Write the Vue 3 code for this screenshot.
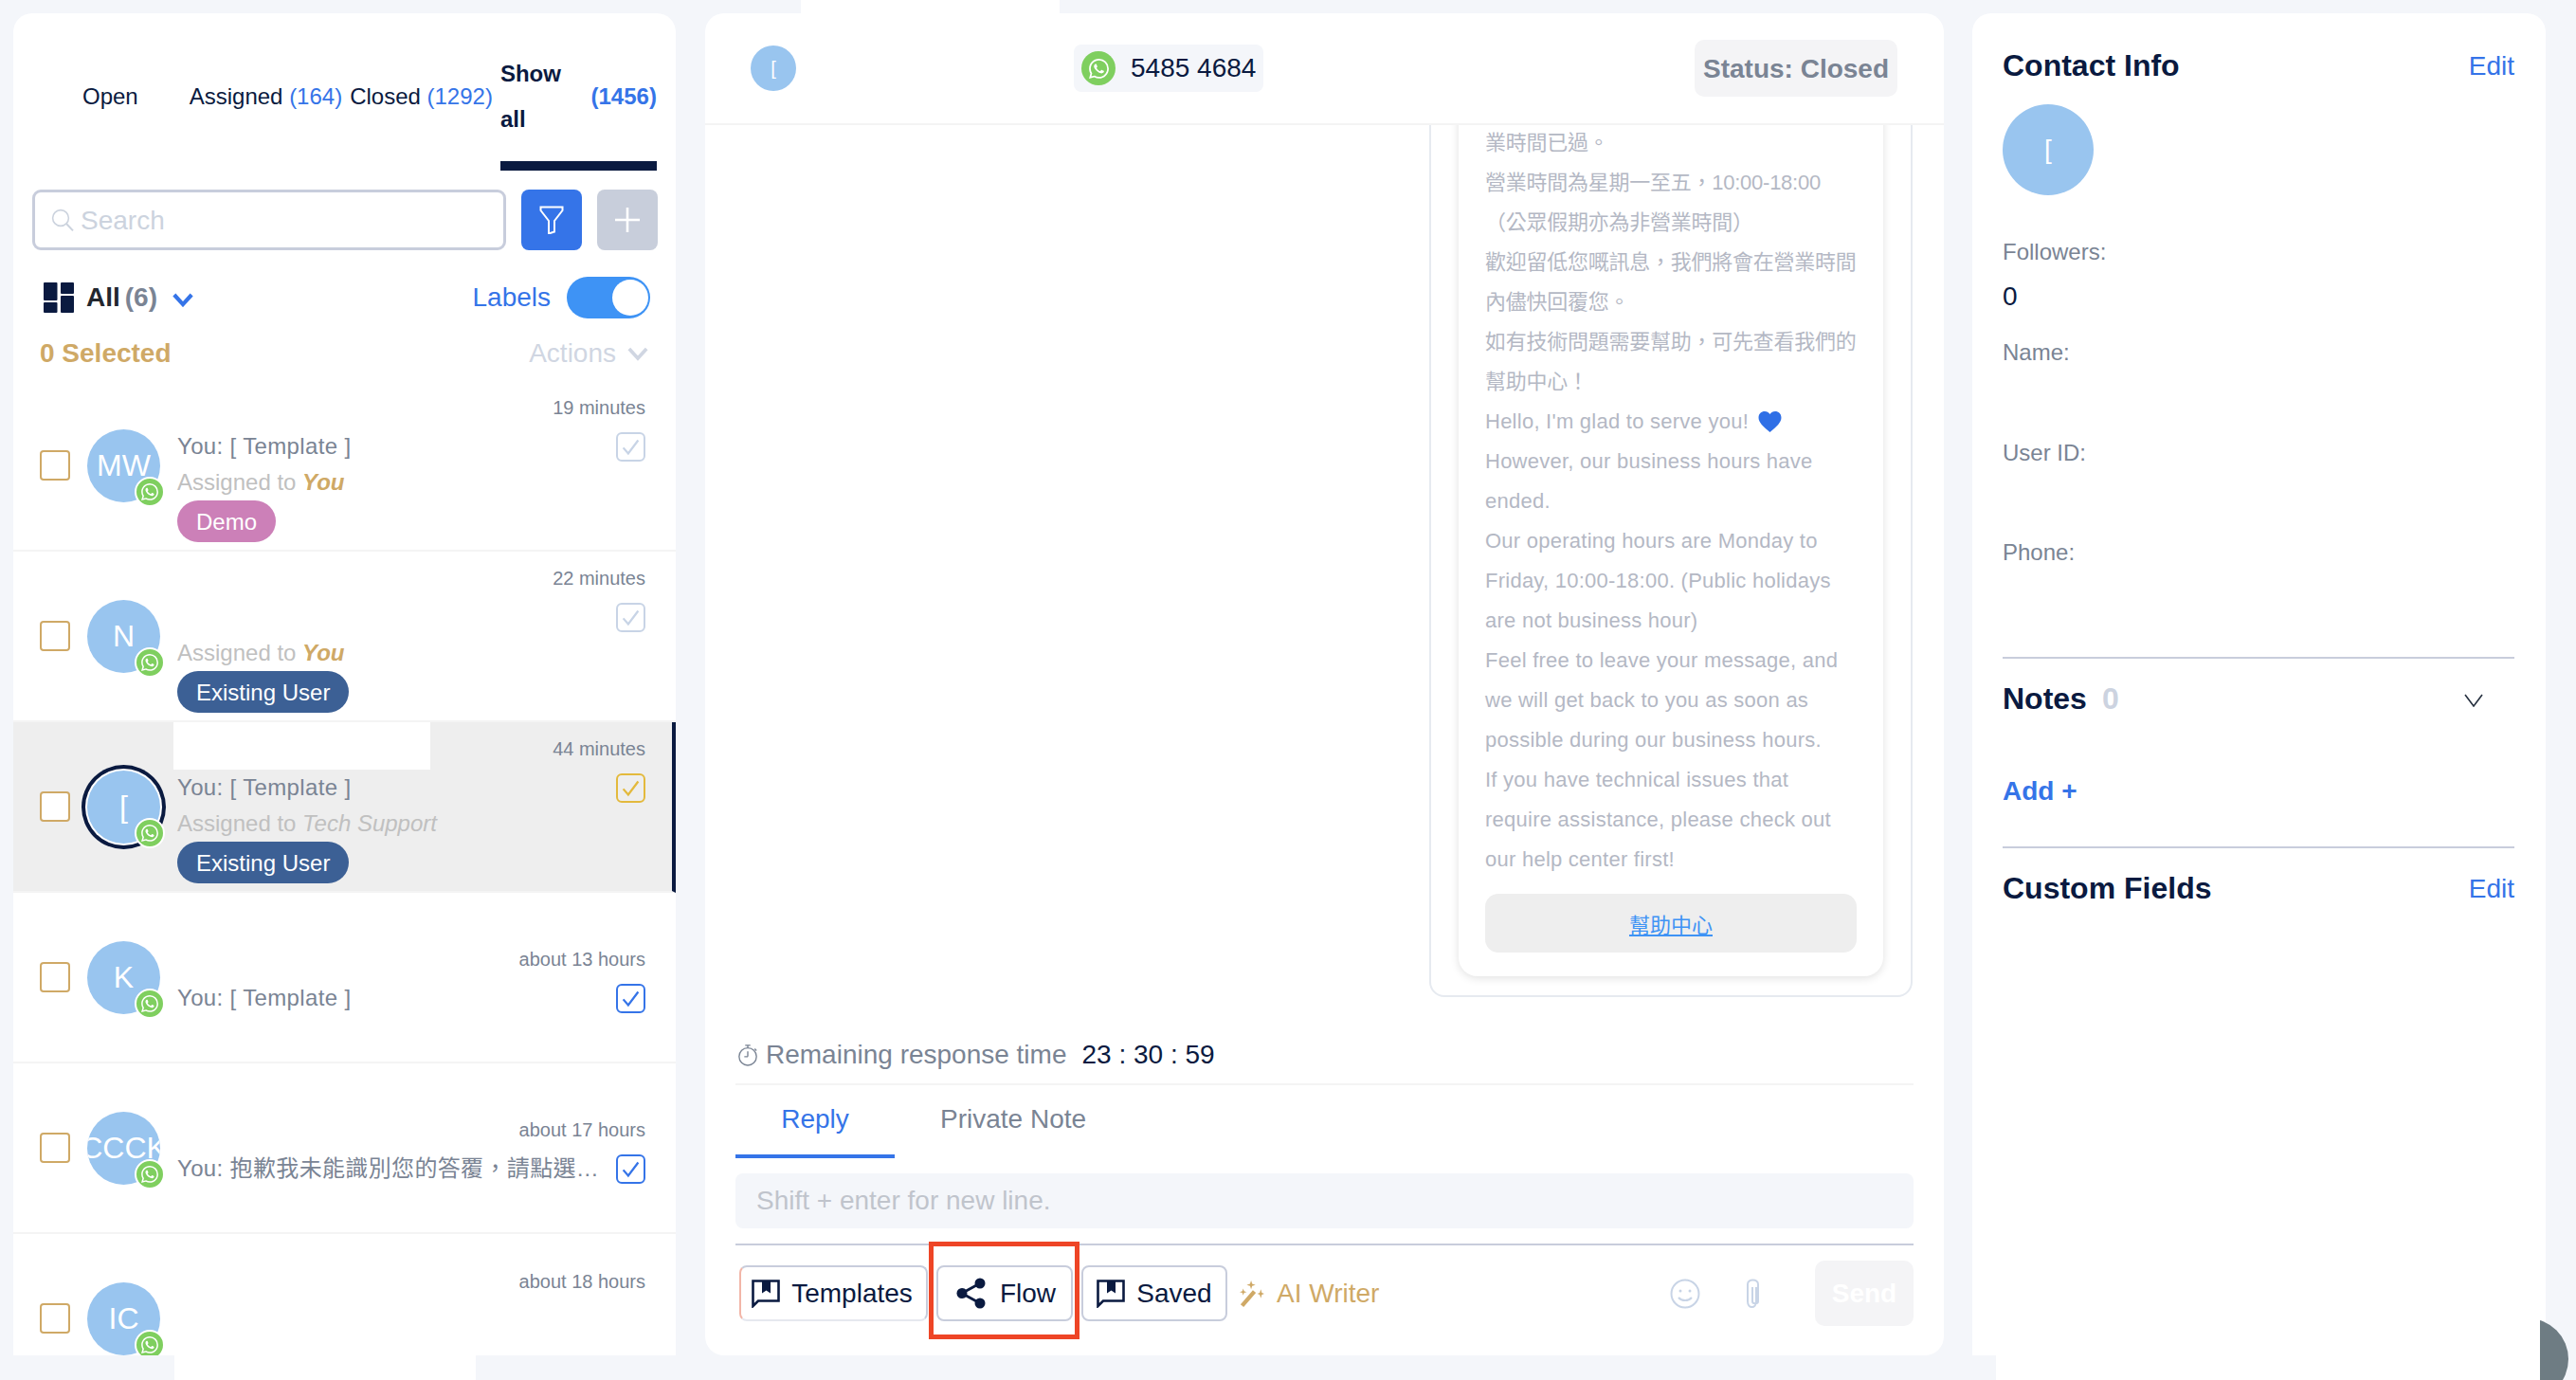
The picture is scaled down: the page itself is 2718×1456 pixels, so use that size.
<template>
  <div class="page">
    <!-- conversation list -->
    <section class="panel list-panel">
      <div class="tabs">
        <div class="tab tab-open">Open</div>
        <div class="tab tab-assigned">Assigned&nbsp;<span class="count">(164)</span></div>
        <div class="tab tab-closed">Closed&nbsp;<span class="count">(1292)</span></div>
        <div class="tab tab-all">
          <span class="all-label">Show all</span>
          <span class="count">(1456)</span>
        </div>
      </div>

      <div class="search-row">
        <div class="search-box">
          <svg class="search-icon" viewBox="0 0 24 24" fill="none" stroke="#ccd3de" stroke-width="1.6">
            <circle cx="10" cy="10" r="8.4" />
            <path d="M16 16l7 7.4" stroke-width="2" />
          </svg>
          <span>Search</span>
        </div>
        <div class="square-btn filter-btn">
          <svg viewBox="0 0 26 30" width="26" height="30" fill="none" stroke="#fff" stroke-width="2">
            <path d="M1.5 1.5h23v3.5L16 16v11.5l-6 2V16L1.500 5z" />
          </svg>
        </div>
        <div class="square-btn add-btn">
          <svg viewBox="0 0 24 24" width="26" height="26" stroke="#fff" stroke-width="2.4">
            <path d="M12 0v24M0 12h24" />
          </svg>
        </div>
      </div>

      <div class="filter-row">
        <svg class="grid-icon" viewBox="0 0 32 32" fill="#0a1a40">
          <rect x="0" y="0" width="14.500" height="19" rx="1" />
          <rect x="18" y="0" width="14" height="12" rx="1" />
          <rect x="0" y="21" width="14.500" height="11" rx="1" />
          <rect x="18" y="14" width="14" height="18" rx="1" />
        </svg>
        <span class="all-text">All</span>
        <span class="all-count">(6)</span>
        <svg class="all-chevron" viewBox="0 0 24 16" fill="none" stroke="#3574e8" stroke-width="4.500">
          <path d="M2 2l10 11L22 2" />
        </svg>
        <span class="labels-text">Labels</span>
        <div class="toggle"><div class="knob"></div></div>
      </div>

      <div class="selected-row">
        <span class="selected-text">0 Selected</span>
        <span class="actions-text">Actions</span>
        <svg class="actions-chevron" viewBox="0 0 24 16" fill="none" stroke="#d0d6e2" stroke-width="4">
          <path d="M2 2l10 11L22 2" />
        </svg>
      </div>

      <div class="items">
        <div
          v-for="item in items"
          :key="item.id"
          :class="['item', { active: item.active }]"
        >
          <div class="pick"></div>
          <div class="avatar-wrap">
            <div class="avatar"><span>{{ item.initials }}</span></div>
            <div class="badge">
              <svg viewBox="0 0 24 24" width="18" height="18" fill="#fff"><path :d="whatsappPath" /></svg>
            </div>
          </div>
          <div class="item-body">
            <div class="item-time">{{ item.time }}</div>
            <div class="item-msg-row">
              <div class="item-msg">{{ item.msg }}</div>
              <div v-if="item.check" :class="['check', item.check]">
                <svg viewBox="0 0 24 24" width="21" height="21" fill="none" stroke="currentColor" stroke-width="2.600">
                  <path d="M3 13l6 7L21 4" />
                </svg>
              </div>
            </div>
            <div v-if="item.assigned" class="item-assigned">
              Assigned to <em :class="{ you: item.assigned === 'You' }">{{ item.assigned }}</em>
            </div>
            <div v-if="item.spacer" class="item-spacer"></div>
            <div v-if="item.tag" class="tag" :class="item.tagClass">{{ item.tag }}</div>
          </div>
        </div>
      </div>
    </section>

    <!-- chat -->
    <section class="panel chat-panel">
      <header class="chat-head">
        <div class="head-avatar">[</div>
        <div class="phone-pill">
          <div class="phone-icon">
            <svg viewBox="0 0 24 24" width="21" height="21" fill="#fff"><path :d="whatsappPath" /></svg>
          </div>
          <span>5485 4684</span>
        </div>
        <div class="status">Status: Closed</div>
      </header>

      <div class="chat-scroll">
        <div class="bubble">
          <div class="bubble-card">
            <div
              v-for="line in messageLines"
              :key="line"
              :class="['bubble-line', { cjk: /[\u4e00-\u9fff]/.test(line) }]"
            >
              {{ line }}
              <svg v-if="line.startsWith('Hello')" class="heart" viewBox="0 0 24 22">
                <path fill="#2f6fe6" d="M12 21.500C5 15.500.5 11.500.5 6.800.5 3 3.400.5 6.700.5c2.200 0 4.100 1 5.300 2.900C13.200 1.500 15.100.5 17.300.5c3.300 0 6.200 2.500 6.200 6.300 0 4.700-4.500 8.700-11.500 14.700z" />
              </svg>
            </div>
            <div class="help-btn"><a class="help-link">幫助中心</a></div>
          </div>
        </div>
      </div>

      <div class="composer">
        <div class="timer">
          <svg class="timer-icon" viewBox="0 0 24 26" fill="none" stroke="#7a8494" stroke-width="1.500">
            <circle cx="12" cy="15" r="10" />
            <path d="M9 2h6M12 2v3M12 15V9M12 15H8M20 6l2 2" />
          </svg>
          <span class="timer-label">Remaining response time</span>
          <span class="timer-value">23 : 30 : 59</span>
        </div>

        <div class="reply-tabs">
          <div class="reply-tab active">Reply</div>
          <div class="reply-tab">Private Note</div>
        </div>

        <div class="reply-input">Shift + enter for new line.</div>

        <div class="toolbar">
          <div class="tool-btn tool-templates">
            <svg viewBox="0 0 30 30" width="30" height="30"><path fill="none" stroke="#0a1a40" stroke-width="2.600" d="M1.500 1.500h27v21H7L1.500 28z" /><path fill="#0a1a40" d="M11 1.500h9v13l-4.500-3-4.500 3z" /></svg>
            <span>Templates</span>
          </div>
          <div class="tool-btn tool-flow">
            <svg viewBox="0 0 31 33" width="31" height="33"><path fill="none" stroke="#0a1a40" stroke-width="2.800" d="M25 6L6 16.500 25 27" /><circle cx="25" cy="6" r="5.500" fill="#0a1a40" /><circle cx="6" cy="16.500" r="5.500" fill="#0a1a40" /><circle cx="25" cy="27" r="5.500" fill="#0a1a40" /></svg>
            <span>Flow</span>
          </div>
          <div class="tool-btn tool-saved">
            <svg viewBox="0 0 30 30" width="30" height="30"><path fill="none" stroke="#0a1a40" stroke-width="2.600" d="M1.500 1.500h27v21H7L1.500 28z" /><path fill="#0a1a40" d="M11 1.500h9v13l-4.500-3-4.500 3z" /></svg>
            <span>Saved</span>
          </div>
          <div class="ai-writer">
            <svg viewBox="0 0 28 30" width="26" height="28" fill="#cfa966">
              <path d="M1 27L15 11l3.500 3L4.500 30z" />
              <path d="M13 0l1.200 3.800L18 5l-3.800 1.200L13 10l-1.200-3.800L8 5l3.800-1.200zM24 10l1.200 3.800L28 15l-2.800 1.200L24 20l-1.200-3.800L20 15l2.800-1.200zM4 9l1 3 3 1-3 1-1 3-1-3-3-1 3-1z" />
            </svg>
            <span>AI Writer</span>
          </div>
          <svg class="emoji-icon" viewBox="0 0 32 32" fill="none" stroke="#c8d4e6" stroke-width="2">
            <circle cx="16" cy="16" r="14.500" />
            <circle cx="11" cy="13" r="1.500" fill="#c8d4e6" stroke="none" />
            <circle cx="21" cy="13" r="1.500" fill="#c8d4e6" stroke="none" />
            <path d="M9 20c3.500 4 10.500 4 14 0" />
          </svg>
          <svg class="clip-icon" viewBox="0 0 16 32" fill="none" stroke="#c8d4e6" stroke-width="2">
            <path d="M12 9v15c0 8-9 8-9 0V6c0-6 11-6 11 0v18c0 3-6 3-6 0V9" />
          </svg>
          <div class="send-btn">Send</div>
        </div>
      </div>
    </section>

    <!-- contact -->
    <section class="panel info-panel">
      <div class="info-title-row">
        <h2>Contact Info</h2>
        <span class="edit">Edit</span>
      </div>
      <div class="info-avatar">[</div>
      <div class="info-label followers">Followers:</div>
      <div class="info-value">0</div>
      <div class="fields">
        <div v-for="field in fields" :key="field" class="field info-label">{{ field }}</div>
      </div>
      <div class="divider first"></div>
      <div class="info-title-row notes-row">
        <h2>Notes</h2>
        <span class="notes-count">0</span>
        <svg class="notes-chevron" viewBox="0 0 20 14" fill="none" stroke="#26303f" stroke-width="1.600">
          <path d="M1 1l9 12 9-12" />
        </svg>
      </div>
      <div class="add-note">Add +</div>
      <div class="divider second"></div>
      <div class="info-title-row custom-row">
        <h2>Custom Fields</h2>
        <span class="edit">Edit</span>
      </div>
    </section>

    <!-- blanked out areas and overlays of the screenshot -->
    <div class="patch patch-top"></div>
    <div class="patch patch-item"></div>
    <div class="patch patch-list"></div>
    <div class="patch patch-info"></div>
    <div class="chat-bubble-btn"><div class="chat-bubble-circle"></div></div>
    <div class="flow-highlight"></div>
  </div>
</template>

<script setup>
const whatsappPath = 'M17.472 14.382c-.297-.149-1.758-.867-2.03-.967-.273-.099-.471-.148-.67.15-.197.297-.767.966-.94 1.164-.173.199-.347.223-.644.075-.297-.15-1.255-.463-2.39-1.475-.883-.788-1.48-1.761-1.653-2.059-.173-.297-.018-.458.13-.606.134-.133.298-.347.446-.52.149-.174.198-.298.298-.497.099-.198.05-.371-.025-.52-.075-.149-.669-1.612-.916-2.207-.242-.579-.487-.5-.669-.51-.173-.008-.371-.01-.57-.01-.198 0-.52.074-.792.372-.272.297-1.04 1.016-1.04 2.479 0 1.462 1.065 2.875 1.213 3.074.149.198 2.096 3.2 5.077 4.487.709.306 1.262.489 1.694.625.712.227 1.36.195 1.871.118.571-.085 1.758-.719 2.006-1.413.248-.694.248-1.289.173-1.413-.074-.124-.272-.198-.57-.347m-5.421 7.403h-.004a9.87 9.87 0 01-5.031-1.378l-.361-.214-3.741.982.998-3.648-.235-.374a9.86 9.86 0 01-1.51-5.26c.001-5.45 4.436-9.884 9.888-9.884 2.64 0 5.122 1.03 6.988 2.898a9.825 9.825 0 012.893 6.994c-.003 5.45-4.437 9.884-9.885 9.884m8.413-18.297A11.815 11.815 0 0012.05 0C5.495 0 .16 5.335.157 11.892c0 2.096.547 4.142 1.588 5.945L.057 24l6.305-1.654a11.882 11.882 0 005.683 1.448h.005c6.554 0 11.89-5.335 11.893-11.893a11.821 11.821 0 00-3.48-8.413z'

const items = [
  { id: 1, initials: 'MW', time: '19 minutes', msg: 'You: [ Template ]', check: 'muted', assigned: 'You', tag: 'Demo', tagClass: 'tag-demo' },
  { id: 2, initials: 'N', time: '22 minutes', msg: '', check: 'muted', assigned: 'You', tag: 'Existing User', tagClass: 'tag-user' },
  { id: 3, initials: '[', time: '44 minutes', msg: 'You: [ Template ]', check: 'gold', assigned: 'Tech Support', tag: 'Existing User', tagClass: 'tag-user', active: true },
  { id: 4, initials: 'K', time: 'about 13 hours', msg: 'You: [ Template ]', check: 'blue' },
  { id: 5, initials: 'CCCK', time: 'about 17 hours', msg: 'You: 抱歉我未能識別您的答覆，請點選下方的選項繼續查詢', check: 'blue' },
  { id: 6, initials: 'IC', time: 'about 18 hours', msg: '', spacer: true }
]

const messageLines = [
  '業時間已過。',
  '營業時間為星期一至五，10:00-18:00',
  '（公眾假期亦為非營業時間）',
  '歡迎留低您嘅訊息，我們將會在營業時間',
  '內儘快回覆您。',
  '如有技術問題需要幫助，可先查看我們的',
  '幫助中心！',
  "Hello, I'm glad to serve you!",
  'However, our business hours have',
  'ended.',
  'Our operating hours are Monday to',
  'Friday, 10:00-18:00. (Public holidays',
  'are not business hour)',
  'Feel free to leave your message, and',
  'we will get back to you as soon as',
  'possible during our business hours.',
  'If you have technical issues that',
  'require assistance, please check out',
  'our help center first!'
]

const fields = ['Name:', 'User ID:', 'Phone:']
</script>

<style>
html,
body {
  margin: 0;
  background: #f4f6fa;
}
</style>

<style scoped>
.page {
  position: relative;
  width: 2718px;
  height: 1456px;
  box-sizing: border-box;
  padding: 14px 32px 26px 14px;
  display: grid;
  grid-template-columns: 699px 1308px 605px;
  column-gap: 30px;
  background: #f4f6fa;
  overflow: hidden;
  font-family: "Liberation Sans", "Noto Sans CJK TC", sans-serif;
  color: #0a1a40;
}

.panel {
  background: #fff;
  border-radius: 20px 20px 0 0;
  overflow: hidden;
  min-height: 0;
}

/* list panel */
.list-panel {
  display: flex;
  flex-direction: column;
}

.tabs {
  display: flex;
  flex-shrink: 0;
  height: 166px;
  box-sizing: border-box;
  padding: 39px 19px 0 73px;
  font-size: 24px;
}

.tab {
  display: flex;
  align-items: center;
  height: 97px;
  white-space: nowrap;
}

.tab-assigned {
  margin-left: 54px;
}

.tab-closed {
  margin-left: 8px;
}

.tab-all {
  width: 165px;
  margin-left: 8px;
  height: 127px;
  box-sizing: border-box;
  padding-bottom: 20px;
  border-bottom: 10px solid #0a1a40;
  justify-content: space-between;
  font-weight: 700;
}

.all-label {
  width: 60px;
  line-height: 48px;
  white-space: normal;
}

.count {
  color: #3574e8;
}

.search-row {
  display: flex;
  flex-shrink: 0;
  gap: 16px;
  margin: 20px 19px 0 20px;
}

.search-box {
  flex: 1;
  height: 64px;
  box-sizing: border-box;
  border: 3px solid #c8cddc;
  border-radius: 9px;
  display: flex;
  align-items: center;
  padding-left: 17px;
  gap: 7px;
  font-size: 28px;
  color: #ccd3de;
}

.search-box span {
  padding-top: 1px;
}

.search-icon {
  width: 24px;
  height: 26px;
}

.square-btn {
  width: 64px;
  height: 64px;
  border-radius: 8px;
  display: flex;
  align-items: center;
  justify-content: center;
}

.filter-btn {
  background: #3574e8;
}

.add-btn {
  background: #c8cedb;
}

.filter-row {
  display: flex;
  flex-shrink: 0;
  align-items: center;
  height: 44px;
  margin: 28px 27px 0 32px;
  font-size: 28px;
}

.grid-icon {
  width: 32px;
  height: 32px;
  margin-right: 13px;
}

.all-text {
  font-weight: 700;
  color: #23272e;
}

.all-count {
  margin-left: 5px;
  font-weight: 700;
  color: #7a8494;
}

.all-chevron {
  width: 22px;
  height: 15px;
  margin: 4px 0 0 16px;
}

.labels-text {
  margin-left: auto;
  color: #3574e8;
}

.toggle {
  width: 88px;
  height: 44px;
  margin-left: 17px;
  box-sizing: border-box;
  padding: 3px 2px 3px 0;
  border-radius: 22px;
  background: #3e93f5;
  display: flex;
  justify-content: flex-end;
}

.knob {
  width: 38px;
  height: 38px;
  border-radius: 50%;
  background: #fff;
}

.selected-row {
  display: flex;
  flex-shrink: 0;
  align-items: center;
  height: 42px;
  margin: 16px 29px 0 28px;
  font-size: 28px;
}

.selected-text {
  font-weight: 700;
  color: #cfa966;
}

.actions-text {
  margin-left: auto;
  color: #d0d6e2;
}

.actions-chevron {
  width: 22px;
  height: 15px;
  margin-left: 12px;
}

.items {
  flex: 1;
  min-height: 0;
  margin-top: 8px;
  overflow: hidden;
}

.item {
  height: 180px;
  box-sizing: border-box;
  border-bottom: 2px solid #f4f4f4;
  padding: 0 32px 0 28px;
  display: flex;
  align-items: center;
}

.item.active {
  background: #eeeeee;
  border-right: 4px solid #0a1a40;
  padding-right: 28px;
}

.pick {
  width: 32px;
  height: 32px;
  flex-shrink: 0;
  box-sizing: border-box;
  border: 2.500px solid #cfa966;
  border-radius: 4px;
  background: #fff;
  margin-right: 18px;
}

.avatar-wrap {
  position: relative;
  width: 77px;
  height: 77px;
  flex-shrink: 0;
  margin-right: 18px;
}

.avatar {
  width: 77px;
  height: 77px;
  border-radius: 50%;
  background: #99c5ef;
  color: #fff;
  font-size: 32px;
  overflow: hidden;
  display: flex;
  align-items: center;
  justify-content: center;
  white-space: nowrap;
}

.item.active .avatar {
  box-shadow: 0 0 0 2px #fff, 0 0 0 6px #0a1a40;
}

.badge {
  position: absolute;
  left: 50px;
  top: 50px;
  width: 32px;
  height: 32px;
  box-sizing: border-box;
  border: 2px solid #fff;
  border-radius: 50%;
  background: #7fcf5f;
  display: flex;
  align-items: center;
  justify-content: center;
}

.item-body {
  flex: 1;
  min-width: 0;
}

.item-time {
  height: 45px;
  line-height: 40px;
  text-align: right;
  font-size: 20px;
  color: #7a8494;
}

.item-msg-row {
  display: flex;
  justify-content: space-between;
  gap: 13px;
  height: 33px;
  padding-top: 1px;
  box-sizing: border-box;
}

.item-msg {
  flex: 1;
  min-width: 0;
  height: 32px;
  line-height: 30px;
  font-size: 24px;
  letter-spacing: 0.35px;
  color: #7a8494;
  white-space: nowrap;
  overflow: hidden;
  text-overflow: ellipsis;
}

.check {
  width: 31px;
  height: 31px;
  flex-shrink: 0;
  box-sizing: border-box;
  border: 2px solid currentColor;
  border-radius: 6px;
  display: flex;
  align-items: center;
  justify-content: center;
}

.check.muted {
  color: #c8d4e6;
}

.check.gold {
  color: #e3b93c;
}

.check.blue {
  color: #3574e8;
}

.item-assigned {
  height: 40px;
  line-height: 42px;
  font-size: 24px;
  color: #c0c0c0;
}

.item-assigned em.you {
  font-weight: 700;
  color: #cfa966;
}

.item-spacer {
  height: 40px;
}

.tag {
  display: inline-block;
  height: 44px;
  line-height: 45px;
  padding: 0 20px;
  border-radius: 22px;
  font-size: 24px;
  color: #fff;
}

.tag-demo {
  background: #cc80b8;
}

.tag-user {
  background: #3c6095;
}

/* chat panel */
.chat-panel {
  margin-left: 1px;
  border-radius: 20px;
  display: flex;
  flex-direction: column;
}

.chat-head {
  display: flex;
  flex-shrink: 0;
  align-items: center;
  height: 118px;
  box-sizing: border-box;
  border-bottom: 2px solid #f4f4f4;
  padding: 0 49px 0 48px;
}

.head-avatar {
  width: 48px;
  height: 48px;
  border-radius: 50%;
  background: #99c5ef;
  color: #fff;
  font-size: 20px;
  display: flex;
  align-items: center;
  justify-content: center;
}

.phone-pill {
  display: flex;
  align-items: center;
  gap: 16px;
  width: 200px;
  height: 50px;
  box-sizing: border-box;
  margin-left: 293px;
  padding-left: 8px;
  border-radius: 8px;
  background: #f4f6fa;
  font-size: 28px;
}

.phone-icon {
  width: 36px;
  height: 36px;
  border-radius: 50%;
  background: #7fcf5f;
  display: flex;
  align-items: center;
  justify-content: center;
}

.status {
  margin-left: auto;
  width: 214px;
  height: 60px;
  line-height: 61px;
  text-align: center;
  border-radius: 10px;
  background: #f4f4f6;
  font-size: 28px;
  font-weight: 700;
  color: #7a8494;
}

.chat-scroll {
  flex: 1;
  min-height: 0;
  overflow: hidden;
  display: flex;
  flex-direction: column;
  justify-content: flex-end;
  padding: 0 33px 35px 0;
}

.bubble {
  flex-shrink: 0;
  align-self: flex-end;
  width: 510px;
  box-sizing: border-box;
  border: 2px solid #e6eaf0;
  border-radius: 16px;
  padding: 0 29px 20px;
}

.bubble-card {
  padding: 40px 28px 25px;
  border-radius: 20px;
  background: #fff;
  box-shadow: 0 2px 10px rgba(0, 0, 0, 0.12);
}

.bubble-line {
  display: flex;
  align-items: center;
  line-height: 42px;
  font-size: 22px;
  letter-spacing: 0.25px;
  white-space: nowrap;
  color: #b4b8c4;
}

.bubble-line.cjk {
  letter-spacing: -0.25px;
}

.heart {
  width: 25px;
  height: 24px;
  margin-left: 10px;
}

.help-btn {
  margin-top: 15px;
  height: 62px;
  border-radius: 14px;
  background: #eeeeee;
  display: flex;
  align-items: center;
  justify-content: center;
}

.help-link {
  font-size: 22px;
  color: #3e93f5;
  text-decoration: underline;
}

.composer {
  flex-shrink: 0;
  padding: 0 32px 31px;
}

.timer {
  display: flex;
  align-items: center;
  height: 58px;
  box-sizing: border-box;
  padding-bottom: 4px;
  border-bottom: 2px solid #f4f4f4;
  font-size: 28px;
}

.timer-icon {
  width: 22px;
  height: 26px;
  margin-left: 2px;
  margin-right: 8px;
}

.timer-label {
  color: #7a8494;
}

.timer-value {
  margin-left: 16px;
}

.reply-tabs {
  display: flex;
  height: 77px;
  font-size: 28px;
  color: #7a8494;
}

.reply-tab {
  box-sizing: border-box;
  height: 77px;
  line-height: 72px;
  margin-left: 48px;
}

.reply-tab.active {
  width: 168px;
  margin-left: 0;
  text-align: center;
  border-bottom: 4px solid #3574e8;
  color: #3574e8;
}

.reply-input {
  margin-top: 16px;
  height: 58px;
  line-height: 58px;
  padding-left: 22px;
  border-radius: 8px;
  background: #f4f6fa;
  font-size: 28px;
  color: #c0c4cc;
}

.toolbar {
  display: flex;
  align-items: center;
  height: 69px;
  margin-top: 16px;
  padding-top: 16px;
  border-top: 2px solid #c8cddc;
  box-sizing: content-box;
}

.tool-btn {
  display: flex;
  align-items: center;
  justify-content: center;
  height: 59px;
  box-sizing: border-box;
  border: 2px solid #c8cddc;
  border-radius: 8px;
  font-size: 28px;
  gap: 12px;
  background: #fff;
  margin-left: 9px;
}

.tool-templates {
  width: 199px;
  margin-left: 4px;
  padding-right: 3px;
  border-left-color: #f2b6a8;
  border-bottom-color: #e6e8ef;
}

.tool-flow {
  width: 144px;
  gap: 15px;
  padding-left: 3px;
}

.tool-saved {
  width: 154px;
}

.ai-writer {
  display: flex;
  align-items: center;
  gap: 13px;
  margin-left: 13px;
  font-size: 28px;
  color: #cfa966;
}

.emoji-icon {
  width: 32px;
  height: 32px;
  margin-left: auto;
}

.clip-icon {
  width: 16px;
  height: 32px;
  margin-left: 47px;
}

.send-btn {
  width: 104px;
  height: 69px;
  line-height: 69px;
  margin-left: 58px;
  text-align: center;
  border-radius: 10px;
  background: #f4f4f6;
  color: #fff;
  font-size: 28px;
  font-weight: 700;
}

/* contact panel */
.info-panel {
  padding: 35px 33px 0 32px;
}

.info-title-row {
  display: flex;
  align-items: center;
  justify-content: space-between;
  height: 40px;
}

.info-title-row h2 {
  margin: 0;
  font-size: 32px;
  font-weight: 700;
}

.edit {
  padding-top: 2px;
  font-size: 28px;
  color: #3574e8;
}

.info-avatar {
  width: 96px;
  height: 96px;
  margin-top: 21px;
  border-radius: 50%;
  background: #99c5ef;
  color: #fff;
  font-size: 28px;
  display: flex;
  align-items: center;
  justify-content: center;
}

.info-label {
  line-height: 30px;
  font-size: 24px;
  color: #7a8494;
}

.followers {
  margin-top: 45px;
}

.info-value {
  margin-top: 16px;
  line-height: 32px;
  font-size: 28px;
}

.fields {
  margin-top: 28px;
}

.field {
  height: 105.500px;
}

.divider {
  height: 2px;
  background: #c8cddc;
}

.divider.first {
  margin-top: 19.500px;
}

.notes-row {
  margin-top: 22px;
  justify-content: flex-start;
}

.notes-count {
  margin-left: 16px;
  font-size: 32px;
  font-weight: 700;
  color: #ccd3e0;
}

.notes-chevron {
  width: 20px;
  height: 14px;
  margin: 4px 33px 0 auto;
}

.add-note {
  margin-top: 62px;
  line-height: 32px;
  font-size: 28px;
  font-weight: 700;
  color: #3574e8;
}

.divider.second {
  margin-top: 42px;
}

.custom-row {
  margin-top: 22px;
}

/* overlays */
.patch {
  position: absolute;
  background: #fff;
}

.patch-top {
  left: 845px;
  top: 0;
  width: 273px;
  height: 14px;
}

.patch-item {
  left: 183px;
  top: 762px;
  width: 271px;
  height: 50px;
}

.patch-list {
  left: 184px;
  top: 1430px;
  width: 318px;
  height: 26px;
}

.patch-info {
  left: 2106px;
  top: 1430px;
  width: 574px;
  height: 26px;
}

.chat-bubble-btn {
  position: absolute;
  left: 2680px;
  top: 1380px;
  width: 38px;
  height: 76px;
  overflow: hidden;
}

.chat-bubble-circle {
  position: absolute;
  left: -56px;
  top: 11px;
  width: 86px;
  height: 86px;
  border-radius: 50%;
  background: #6e7c83;
}

.flow-highlight {
  position: absolute;
  left: 980px;
  top: 1310px;
  width: 159px;
  height: 103px;
  box-sizing: border-box;
  border: 5px solid #ee4526;
}
</style>
